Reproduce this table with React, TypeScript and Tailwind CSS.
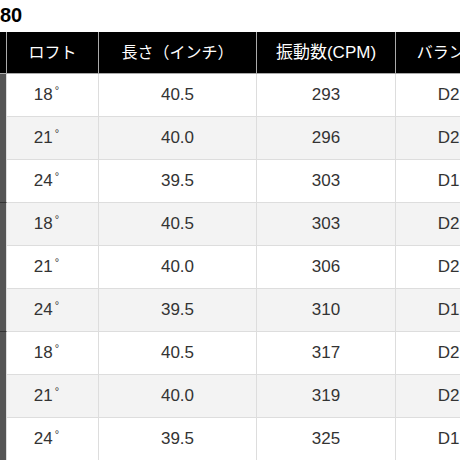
const groups = [
  [
    { loft: "18", len: "40.5", cpm: "293", bal: "D2" },
    { loft: "21", len: "40.0", cpm: "296", bal: "D2" },
    { loft: "24", len: "39.5", cpm: "303", bal: "D1" },
  ],
  [
    { loft: "18", len: "40.5", cpm: "303", bal: "D2" },
    { loft: "21", len: "40.0", cpm: "306", bal: "D2" },
    { loft: "24", len: "39.5", cpm: "310", bal: "D1" },
  ],
  [
    { loft: "18", len: "40.5", cpm: "317", bal: "D2" },
    { loft: "21", len: "40.0", cpm: "319", bal: "D2" },
    { loft: "24", len: "39.5", cpm: "325", bal: "D1" },
  ],
];

const font = { fontFamily: '"Liberation Sans", "Noto Sans CJK JP", Arial, sans-serif' };

export default function App() {
  let rowIndex = 0;
  return (
    <div className="w-[460px] h-[460px] overflow-hidden bg-white text-[#333]" style={font}>
      <h2 className="h-[32px] pt-[5px] text-[20px] font-bold leading-[20px] text-black">80</h2>
      <table className="table-fixed border-separate border-spacing-0 w-[641px] text-[17px]">
        <colgroup>
          <col className="w-[7px]" />
          <col className="w-[92px]" />
          <col className="w-[158px]" />
          <col className="w-[139px]" />
          <col className="w-[106px]" />
          <col className="w-[139px]" />
        </colgroup>
        <thead>
          <tr className="bg-black text-white text-[16px]">
            <th className="h-[42px] border-r border-b border-[#aaa]"></th>
            <th className="h-[42px] border-r border-b border-[#aaa] font-normal text-center">ロフト</th>
            <th className="h-[42px] border-r border-b border-[#aaa] font-normal text-center">長さ（インチ）</th>
            <th className="h-[42px] border-r border-b border-[#aaa] font-normal text-center text-[17px]">振動数(CPM)</th>
            <th className="h-[42px] border-r border-b border-[#aaa] font-normal text-center whitespace-nowrap">バランス</th>
            <th className="h-[42px] border-b border-[#aaa] font-normal text-center whitespace-nowrap">重量</th>
          </tr>
        </thead>
        <tbody>
          {groups.map((g, gi) =>
            g.map((r, ri) => {
              const even = rowIndex++ % 2 === 1;
              const bg = even ? "bg-[#f3f3f3]" : "bg-white";
              return (
                <tr key={`${gi}-${ri}`} className={bg}>
                  {ri === 0 && (
                    <td rowSpan={3} className="bg-[#555] border-r border-b border-r-[#ddd] border-b-[#333]"></td>
                  )}
                  <td className="h-[43px] border-r border-b border-[#ddd] text-center pr-[12px]">
                    {r.loft}
                    <span className="text-[11px] align-[6px] ml-[2px]">°</span>
                  </td>
                  <td className="h-[43px] border-r border-b border-[#ddd] text-center">{r.len}</td>
                  <td className="h-[43px] border-r border-b border-[#ddd] text-center">{r.cpm}</td>
                  <td className="h-[43px] border-r border-b border-[#ddd] text-center">{r.bal}</td>
                  <td className="h-[43px] border-b border-[#ddd] text-center">-</td>
                </tr>
              );
            })
          )}
        </tbody>
      </table>
    </div>
  );
}
